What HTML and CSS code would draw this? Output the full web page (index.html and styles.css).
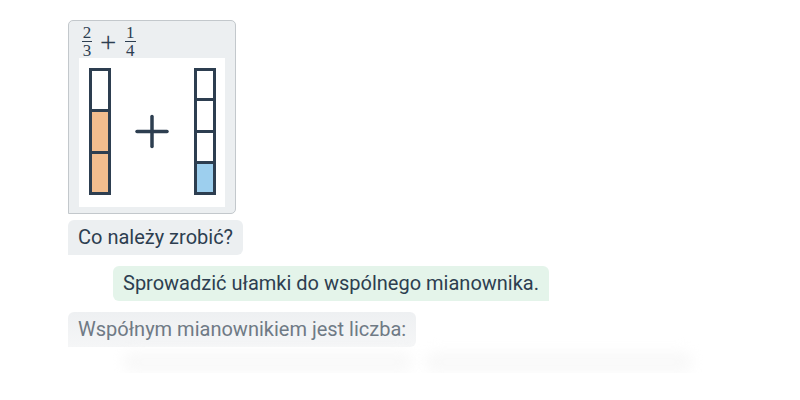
FILE: index.html
```html
<!DOCTYPE html>
<html lang="pl">
<head>
<meta charset="utf-8">
<link rel="stylesheet" href="styles.css">
</head>
<body>
<div class="chat">
  <div class="card">
    <div class="math">
      <span class="frac"><span class="num">2</span><span class="den">3</span></span>
      <span class="op">+</span>
      <span class="frac"><span class="num">1</span><span class="den">4</span></span>
    </div>
    <div class="panel">
      <svg width="146" height="149" viewBox="0 0 146 149">
        <g stroke="#2d3e50" stroke-width="3" fill="none">
          <rect x="11.5" y="53" width="19" height="41.5" fill="#f2bd8e" stroke="none"/>
          <rect x="11.5" y="94.5" width="19" height="41.5" fill="#f2bd8e" stroke="none"/>
          <rect x="11.5" y="11.5" width="19" height="124"/>
          <line x1="11.5" y1="52.5" x2="30.5" y2="52.5"/>
          <line x1="11.5" y1="94.5" x2="30.5" y2="94.5"/>
          <rect x="116.5" y="105" width="19" height="31" fill="#9dcfee" stroke="none"/>
          <rect x="116.5" y="11.5" width="19" height="124"/>
          <line x1="116.5" y1="41.5" x2="135.5" y2="41.5"/>
          <line x1="116.5" y1="73.5" x2="135.5" y2="73.5"/>
          <line x1="116.5" y1="104.5" x2="135.5" y2="104.5"/>
          <g stroke-width="3.5" stroke-linecap="round">
            <line x1="58" y1="73.5" x2="88" y2="73.5"/>
            <line x1="73" y1="58.5" x2="73" y2="88.5"/>
          </g>
        </g>
      </svg>
    </div>
  </div>
  <div class="msg bot">Co należy zrobić?</div>
  <div class="msg user">Sprowadzić ułamki do wspólnego mianownika.</div>
  <div class="msg bot fading">Współnym mianownikiem jest liczba:</div>
  <div class="ghosts">
    <span class="ghost g1"></span>
    <span class="ghost g2"></span>
  </div>
</div>
</body>
</html>
```

FILE: styles.css
```css
html, body {
  margin: 0;
  padding: 0;
  background: #ffffff;
}
body {
  font-family: Roboto, "Liberation Sans", sans-serif;
  color: #2d3e50;
}
.chat {
  display: flex;
  flex-direction: column;
  align-items: flex-start;
  padding: 20px 0 0 68px;
}
.card {
  background: #eceff1;
  border: 1px solid #c3c8cc;
  border-radius: 5px 5px 5px 0;
  padding: 4px 10px 6px 10px;
  box-sizing: border-box;
  width: 168px;
}
.math {
  display: flex;
  align-items: center;
  height: 33px;
  padding-left: 3px;
  font-family: "Liberation Serif", "DejaVu Serif", serif;
  color: #2d3e50;
}
.frac {
  display: inline-flex;
  flex-direction: column;
  align-items: center;
  font-size: 17px;
  line-height: 14px;
  width: 10px;
}
.frac .num {
  border-bottom: 1px solid #2d3e50;
  padding: 0 1px 1px;
}
.frac .den {
  padding-top: 2px;
}
.op {
  font-size: 29px;
  line-height: 26px;
  margin: 0 9px 0 8px;
  position: relative;
  top: 0px;
}
.panel {
  background: #ffffff;
  width: 146px;
  height: 149px;
}
.panel svg {
  display: block;
}
.msg {
  font-size: 20px;
  line-height: 23px;
  padding: 6px 10px 6px 10px;
  border-radius: 6px;
}
.bot {
  background: #eceff1;
  border-bottom-left-radius: 0;
  margin-top: 6px;
}
.user {
  background: #e4f4ea;
  border-bottom-right-radius: 0;
  margin-top: 11px;
  margin-left: 45px;
}
.fading {
  margin-top: 11px;
  color: #6f7a85;
  background: linear-gradient(#eef0f2, #f5f6f7);
}
.ghosts {
  display: flex;
  gap: 12px;
  margin: 4px 0 0 55px;
}
.ghost {
  display: block;
  height: 22px;
  border-radius: 10px;
  background: #f9f9f9;
  filter: blur(6px);
}
.g1 { width: 290px; }
.g2 { width: 268px; }
```
